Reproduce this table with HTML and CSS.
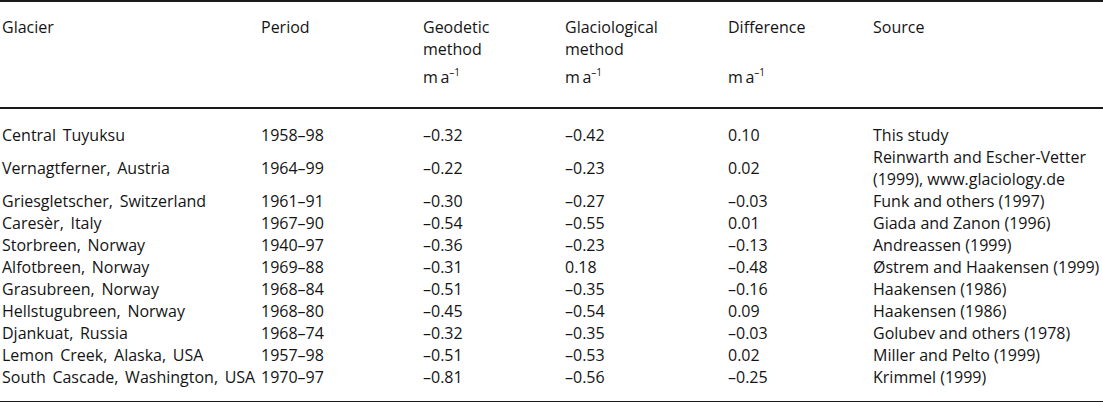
FILE: index.html
```html
<!DOCTYPE html>
<html>
<head>
<meta charset="utf-8">
<link rel="stylesheet" href="styles.css">
</head>
<body>
<table class="tbl">
  <colgroup>
    <col class="c1"><col class="c2"><col class="c3"><col class="c4"><col class="c5"><col class="c6">
  </colgroup>
  <thead>
    <tr class="head">
      <th>Glacier</th>
      <th>Period</th>
      <th>Geodetic<br>method</th>
      <th>Glaciological<br>method</th>
      <th>Difference</th>
      <th>Source</th>
    </tr>
    <tr class="units">
      <th></th>
      <th></th>
      <th>m&#8201;a<sup>–1</sup></th>
      <th>m&#8201;a<sup>–1</sup></th>
      <th>m&#8201;a<sup>–1</sup></th>
      <th></th>
    </tr>
  </thead>
  <tbody>
    <tr class="first"><td>Central Tuyuksu</td><td>1958–98</td><td>–0.32</td><td>–0.42</td><td>0.10</td><td>This study</td></tr>
    <tr><td>Vernagtferner, Austria</td><td>1964–99</td><td>–0.22</td><td>–0.23</td><td>0.02</td><td>Reinwarth and Escher-Vetter<br>(1999), www.glaciology.de</td></tr>
    <tr><td>Griesgletscher, Switzerland</td><td>1961–91</td><td>–0.30</td><td>–0.27</td><td>–0.03</td><td>Funk and others (1997)</td></tr>
    <tr><td>Caresèr, Italy</td><td>1967–90</td><td>–0.54</td><td>–0.55</td><td>0.01</td><td>Giada and Zanon (1996)</td></tr>
    <tr><td>Storbreen, Norway</td><td>1940–97</td><td>–0.36</td><td>–0.23</td><td>–0.13</td><td>Andreassen (1999)</td></tr>
    <tr><td>Alfotbreen, Norway</td><td>1969–88</td><td>–0.31</td><td>0.18</td><td>–0.48</td><td>Østrem and Haakensen (1999)</td></tr>
    <tr><td>Grasubreen, Norway</td><td>1968–84</td><td>–0.51</td><td>–0.35</td><td>–0.16</td><td>Haakensen (1986)</td></tr>
    <tr><td>Hellstugubreen, Norway</td><td>1968–80</td><td>–0.45</td><td>–0.54</td><td>0.09</td><td>Haakensen (1986)</td></tr>
    <tr><td>Djankuat, Russia</td><td>1968–74</td><td>–0.32</td><td>–0.35</td><td>–0.03</td><td>Golubev and others (1978)</td></tr>
    <tr><td>Lemon Creek, Alaska, USA</td><td>1957–98</td><td>–0.51</td><td>–0.53</td><td>0.02</td><td>Miller and Pelto (1999)</td></tr>
    <tr class="last"><td>South Cascade, Washington, USA</td><td>1970–97</td><td>–0.81</td><td>–0.56</td><td>–0.25</td><td>Krimmel (1999)</td></tr>
  </tbody>
</table>
</body>
</html>
```
FILE: styles.css
```css
html, body {
  margin: 0;
  padding: 0;
  background: #ffffff;
}
body {
  font-family: "Open Sans", "DejaVu Sans", sans-serif;
  font-size: 16px;
  color: #141414;
}
.tbl {
  width: 1103px;
  border-collapse: collapse;
  table-layout: fixed;
  border-top: 2px solid #1a1a1a;
  border-bottom: 2px solid #1a1a1a;
}
.c1 { width: 261px; }
.c2 { width: 162px; }
.c3 { width: 142px; }
.c4 { width: 163px; }
.c5 { width: 145px; }
.c6 { width: 230px; }
.tbl th, .tbl td {
  padding: 0;
  text-align: left;
  font-weight: normal;
  vertical-align: middle;
  line-height: 22px;
  white-space: nowrap;
}
.tbl th:first-child, .tbl td:first-child {
  padding-left: 2px;
}
.tbl td:first-child {
  word-spacing: 2.5px;
}
.head th {
  vertical-align: top;
  padding-top: 14px;
}
.units th {
  padding-top: 6px;
  padding-bottom: 19px;
  border-bottom: 2px solid #1a1a1a;
}
.units sup {
  font-size: 10px;
  line-height: 0;
  vertical-align: 7px;
}
.first td { padding-top: 15px; }
.last td { padding-bottom: 13px; }
```
